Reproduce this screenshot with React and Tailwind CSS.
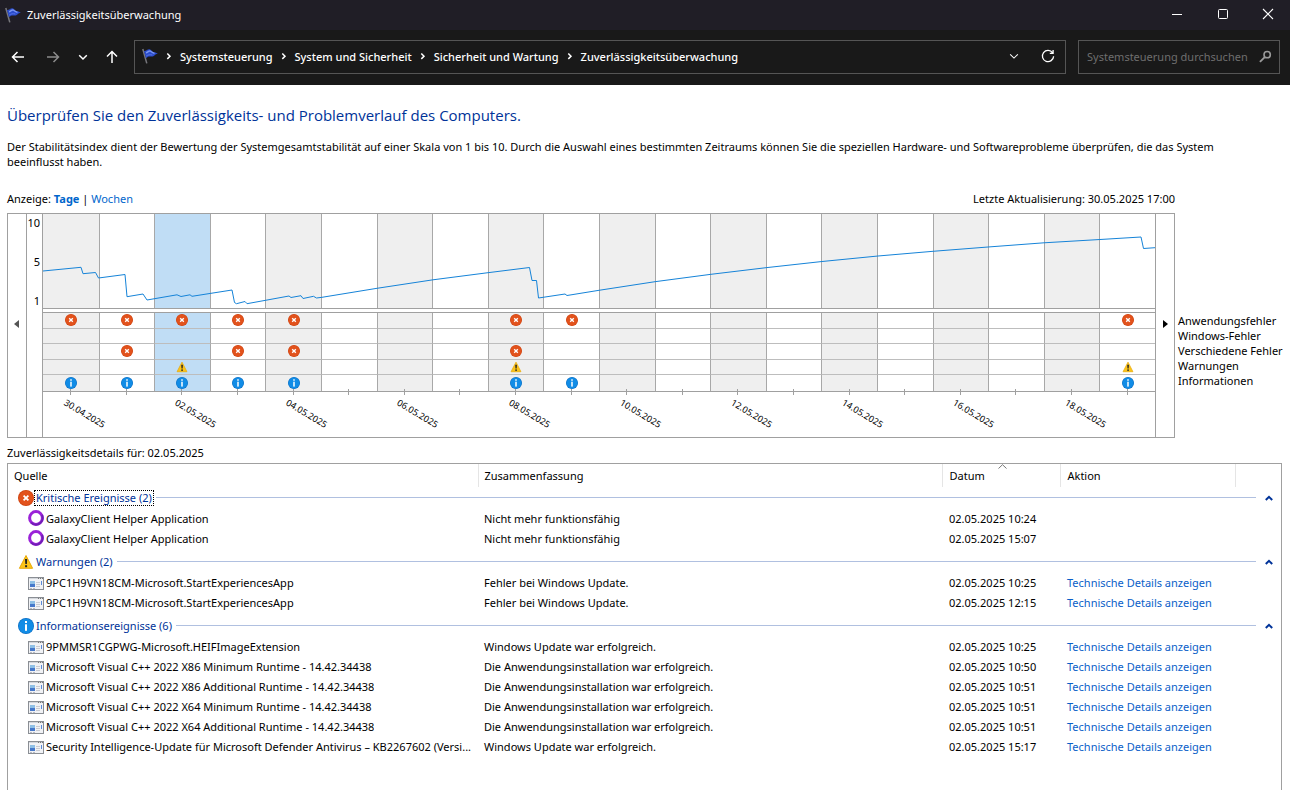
const breadcrumbs = [
  "Systemsteuerung",
  "System und Sicherheit",
  "Sicherheit und Wartung",
  "Zuverlässigkeitsüberwachung",
];

const days = [
  "30.04.2025", "01.05.2025", "02.05.2025", "03.05.2025", "04.05.2025",
  "05.05.2025", "06.05.2025", "07.05.2025", "08.05.2025", "09.05.2025",
  "10.05.2025", "11.05.2025", "12.05.2025", "13.05.2025", "14.05.2025",
  "15.05.2025", "16.05.2025", "17.05.2025", "18.05.2025", "19.05.2025",
];
const selectedDay = 2;

const categories = [
  { name: "Anwendungsfehler", icon: "error", hits: [0, 1, 2, 3, 4, 8, 9, 19] },
  { name: "Windows-Fehler", icon: "error", hits: [] },
  { name: "Verschiedene Fehler", icon: "error", hits: [1, 3, 4, 8] },
  { name: "Warnungen", icon: "warning", hits: [2, 8, 19] },
  { name: "Informationen", icon: "info", hits: [0, 1, 2, 3, 4, 8, 9, 19] },
];

const stability =
  "0,57 38,53.3 40,59.7 52.5,58.5 55.5,64 82,60.5 84,82.7 100,80 104,86 134,80.8 138,82.5 147,80.8 149,82.3 189,76 191.5,88.5 193.5,89.7 202,87.5 204,89.7 246,82 248,83.5 258,81.7 260,84.5 270.5,82.3 273.5,84 279,83.3 334,74.3 390,65.8 445,58.7 486.5,53.5 489,66.5 493.5,66.5 495.5,84 522,80 524,81.5 556,76.3 612,67.7 668,60.3 723,53.7 779,47.5 835,42 890,37.3 945,33 1001,28.8 1057,25.5 1098,23 1100.5,34.5 1112,33.7";

const details = "Technische Details anzeigen";
const installed = "Die Anwendungsinstallation war erfolgreich.";
const groups = [
  {
    title: "Kritische Ereignisse (2)",
    icon: "error",
    focused: true,
    rows: [
      ["ring", "GalaxyClient Helper Application", "Nicht mehr funktionsfähig", "02.05.2025 10:24", ""],
      ["ring", "GalaxyClient Helper Application", "Nicht mehr funktionsfähig", "02.05.2025 15:07", ""],
    ],
  },
  {
    title: "Warnungen (2)",
    icon: "warning",
    rows: [
      ["app", "9PC1H9VN18CM-Microsoft.StartExperiencesApp", "Fehler bei Windows Update.", "02.05.2025 10:25", details],
      ["app", "9PC1H9VN18CM-Microsoft.StartExperiencesApp", "Fehler bei Windows Update.", "02.05.2025 12:15", details],
    ],
  },
  {
    title: "Informationsereignisse (6)",
    icon: "info",
    rows: [
      ["app", "9PMMSR1CGPWG-Microsoft.HEIFImageExtension", "Windows Update war erfolgreich.", "02.05.2025 10:25", details],
      ["app", "Microsoft Visual C++ 2022 X86 Minimum Runtime - 14.42.34438", installed, "02.05.2025 10:50", details],
      ["app", "Microsoft Visual C++ 2022 X86 Additional Runtime - 14.42.34438", installed, "02.05.2025 10:51", details],
      ["app", "Microsoft Visual C++ 2022 X64 Minimum Runtime - 14.42.34438", installed, "02.05.2025 10:51", details],
      ["app", "Microsoft Visual C++ 2022 X64 Additional Runtime - 14.42.34438", installed, "02.05.2025 10:51", details],
      ["app", "Security Intelligence-Update für Microsoft Defender Antivirus – KB2267602 (Versi...", "Windows Update war erfolgreich.", "02.05.2025 15:17", details],
    ],
  },
];

function FlagIcon() {
  return (
    <svg viewBox="0 0 16 16" className="size-4 shrink-0" aria-hidden="true">
      <path d="M.8 1 4.8 15.4" stroke="#77777c" strokeWidth="1.5" />
      <path d="M2 3C4 3.400 5 1 7.600 1.200c1.600.1 2 2.200 3.600 2.800 1.400.5 3 .4 4.600 1.700-2 .2-2.700 1.100-4 2.200C10 9.400 8.400 8 6.800 8.600c-1.200.4-1.800 1.200-2.900 1.400z" fill="#2b4ccb" />
      <path d="M4 4.800C5.600 4.600 6.600 2.500 8.300 3.100c1.300.6 2.300 1.900 4.200 2.300" stroke="#7a96f2" strokeWidth="1.300" fill="none" />
      <path d="M4.200 8C6.500 6.700 7.800 6.400 10.300 7" stroke="#5674e4" strokeWidth="1" fill="none" />
    </svg>
  );
}

function StatusIcon({ kind, className }) {
  if (kind === "warning") {
    return (
      <svg viewBox="0 0 16 16" className={className} aria-hidden="true">
        <path d="M8 1.500 14.600 14.300H1.400z" fill="#fcc419" stroke="#e8a90a" strokeWidth="1" strokeLinejoin="round" />
        <path d="M7 5h2.200l-.3 5H7.300z" fill="#222" />
        <rect x="7.100" y="11.200" width="2" height="2" fill="#222" />
      </svg>
    );
  }
  if (kind === "info") {
    return (
      <svg viewBox="0 0 16 16" className={className} aria-hidden="true">
        <circle cx="8" cy="8" r="8" fill="#0c6fc4" />
        <circle cx="8" cy="8" r="7.300" fill="#118ce6" />
        <rect x="7" y="3" width="2" height="2" fill="#fff" />
        <rect x="7" y="6.300" width="2" height="6.500" fill="#fff" />
      </svg>
    );
  }
  return (
    <svg viewBox="0 0 16 16" className={className} aria-hidden="true">
      <circle cx="8" cy="8" r="8" fill="#cf4310" />
      <circle cx="8" cy="8" r="7.200" fill="#e2521c" />
      <path d="M5.600 5.600 10.400 10.400M10.400 5.600 5.600 10.400" stroke="#fff" strokeWidth="1.800" />
    </svg>
  );
}

function SourceIcon({ kind }) {
  if (kind === "ring") {
    return (
      <svg viewBox="0 0 16 16" className="size-4 shrink-0" aria-hidden="true">
        <circle cx="8" cy="8" r="6.400" fill="#fff" stroke="#9a22d8" strokeWidth="3" />
        <path d="M14 5A6.700 6.700 0 0 1 3.200 12.600" stroke="#6f1fb4" strokeWidth="2" fill="none" />
      </svg>
    );
  }
  return (
    <svg viewBox="0 0 16 16" className="size-4 shrink-0" shapeRendering="crispEdges" aria-hidden="true">
      <rect x="0" y="3" width="16" height="13" fill="#8a8e94" />
      <rect x="1" y="4" width="14" height="11" fill="#f1f2f5" />
      <rect x="1" y="4" width="14" height="1" fill="#d4d7dc" />
      <path d="M10 4h1v1h-1zM12 4h1v1h-1zM14 4h1v1h-1z" fill="#777" />
      <rect x="2" y="7" width="5" height="3" fill="#8fc0e6" />
      <rect x="2" y="10" width="5" height="3" fill="#4678ca" />
      <path d="M8 8h4v1H8zM8 10h4v1H8zM8 12h4v1H8z" fill="#c8cbd2" />
      <rect x="13" y="7" width="1" height="4" fill="#5a8ad8" />
      <path d="M2 14h2v1H2zM5 14h2v1H5z" fill="#b8bbc2" />
    </svg>
  );
}

function Stroke({ d, className, width = 1.5 }) {
  return (
    <svg viewBox="0 0 14 14" className={className} fill="none" stroke="currentColor" strokeWidth={width} aria-hidden="true">
      <path d={d} />
    </svg>
  );
}

function TitleBar() {
  return (
    <header className="flex h-[30px] items-center bg-[#201e26] pl-[5px]">
      <FlagIcon />
      <h1 className="ml-[6px] flex-1 pb-[2px] text-[11px]">Zuverlässigkeitsüberwachung</h1>
      <button aria-label="Minimieren" className="flex h-[30px] w-[46px] items-center justify-center pb-[2px]">
        <svg viewBox="0 0 12 12" className="size-3" shapeRendering="crispEdges"><path d="M1 6h10v1H1z" fill="#fff" /></svg>
      </button>
      <button aria-label="Maximieren" className="flex h-[30px] w-[45px] items-center justify-center pb-[2px]">
        <svg viewBox="0 0 12 12" className="size-3"><rect x="1.500" y="1.500" width="9" height="9" rx="1" fill="none" stroke="#fff" /></svg>
      </button>
      <button aria-label="Schließen" className="flex h-[30px] w-[45px] items-center justify-center pb-[2px]">
        <svg viewBox="0 0 12 12" className="size-3"><path d="M1 1 11 11M11 1 1 11" stroke="#fff" strokeWidth="1.100" /></svg>
      </button>
    </header>
  );
}

function Toolbar() {
  const chevron = "M5.300 4.500 8 7.200 5.300 9.900";
  return (
    <nav className="flex h-[55px] items-center bg-[#191919] pr-[10px] pb-px pl-[11px]">
      <button aria-label="Zurück" className="flex w-[14px] justify-center">
        <Stroke className="size-[14px]" d="M13 7H1.500M6.500 2 1.500 7l5 5" />
      </button>
      <button aria-label="Vorwärts" className="ml-[21px] flex w-[14px] justify-center text-[#8c8c8c]">
        <Stroke className="size-[14px]" d="M1 7h11.500M7.500 2l5 5-5 5" />
      </button>
      <button aria-label="Zuletzt besuchte Orte" className="ml-[16px] flex w-[14px] justify-center">
        <Stroke className="size-[14px]" d="M3.200 5.300 7 9l3.800-3.700" />
      </button>
      <button aria-label="Nach oben" className="ml-[15px] flex w-[14px] justify-center">
        <Stroke className="size-[14px]" d="M7 13V1.500M2 6.500l5-5 5 5" />
      </button>
      <div className="ml-[15px] flex h-[34px] flex-1 items-center border border-[#555] pr-[10px] pb-[2px] pl-[7px]">
        <FlagIcon />
        <ol className="flex flex-1 items-center text-[11px] font-medium">
          {breadcrumbs.map((b) => (
            <li key={b} className="flex items-center">
              <Stroke className="mx-[4px] size-[14px]" d={chevron} />
              <a href="#" className="whitespace-nowrap">{b}</a>
            </li>
          ))}
        </ol>
        <button aria-label="Vorherige Orte"><Stroke width={1.2} className="size-[12px]" d="M2.500 5 7 9.500 11.500 5" /></button>
        <button aria-label="Aktualisieren" className="ml-[21px]">
          <Stroke width={1.3} className="size-[14px]" d="M11.600 3.800A5.600 5.600 0 1 0 12.600 7.200M12.100 1V4.300H8.800" />
        </button>
      </div>
      <div className="ml-[12px] flex h-[34px] w-[202px] items-center border border-[#555] pr-[7px] pb-[2px] pl-[8px]">
        <input
          aria-label="Systemsteuerung durchsuchen"
          placeholder="Systemsteuerung durchsuchen"
          className="min-w-0 flex-1 bg-transparent text-[11px] outline-none placeholder:text-[#6e6e6e]"
        />
        <svg viewBox="0 0 14 14" className="size-[13px] text-[#9a9a9a]" fill="none" stroke="currentColor" aria-hidden="true">
          <circle cx="8.800" cy="5" r="3.400" strokeWidth="1.700" />
          <path d="M6.200 7.600 1 12.800" strokeWidth="2" />
        </svg>
      </div>
    </nav>
  );
}

function columnColor(i) {
  if (i === selectedDay) return "bg-[#c0ddf5]";
  return i % 2 === 0 ? "bg-[#efefef]" : "bg-white";
}

function Chart() {
  return (
    <div className="flex h-[225px] flex-1 border border-[#a0a0a0]">
      <button aria-label="Früher" className="flex w-[19px] justify-center border-r border-[#a0a0a0] pt-[106px] pr-px pb-[110px]">
        <svg viewBox="0 0 5 8" className="h-2 w-[5px]"><path d="M5 0v8L0 4z" fill="#555" /></svg>
      </button>
      <div className="flex h-[94px] w-[15px] flex-col justify-between pt-[2px] pr-[2px] text-right text-[11px] leading-[14px]">
        <span>10</span>
        <span>5</span>
        <span>1</span>
      </div>
      <div className="flex min-w-0 flex-1 flex-col border-x border-[#a0a0a0]">
        <div className="relative grid h-[95px] shrink-0 grid-cols-20 border-b border-[#a0a0a0]">
          {days.map((d, i) => (
            <div key={d} className={`border-l border-[#a8a8a8] first:border-l-0 ${columnColor(i)}`} />
          ))}
          <svg viewBox="0 0 1112 94" preserveAspectRatio="none" className="absolute inset-0 h-[94px] w-full">
            <polyline points={stability} fill="none" stroke="#1583d8" strokeWidth="1" vectorEffect="non-scaling-stroke" />
          </svg>
        </div>
        <div className="mt-[3px] grid h-[80px] shrink-0 grid-rows-5 border-y border-[#a0a0a0]">
          {categories.map((c, r) => (
            <div key={c.name} className="grid grid-cols-20">
              {days.map((d, i) => (
                <div
                  key={d}
                  className={`flex items-center justify-center border-l border-l-[#a8a8a8] first:border-l-0 ${r < 4 ? "border-b border-b-[#bdbdbd]" : ""} ${columnColor(i)}`}
                >
                  {c.hits.includes(i) && <StatusIcon kind={c.icon} className="size-3" />}
                </div>
              ))}
            </div>
          ))}
        </div>
        <div className="grid grid-cols-20">
          {days.map((d, i) => (
            <div key={d} className="-mt-[3px] flex flex-col items-center">
              <span className="h-[6px] w-px bg-[#a0a0a0]" />
              {i % 2 === 0 && (
                <span className="w-[4px] origin-top-left rotate-[31deg] text-[9px] leading-[16px] whitespace-nowrap">{d}</span>
              )}
            </div>
          ))}
        </div>
      </div>
      <button aria-label="Später" className="flex w-[18px] justify-center pt-[106px] pb-[110px]">
        <svg viewBox="0 0 5 8" className="h-2 w-[5px]"><path d="M0 0v8l5-4z" fill="#000" /></svg>
      </button>
    </div>
  );
}

function Details() {
  return (
    <section className="mt-[3px] flex-1 overflow-hidden border border-b-0 border-[#a0a0a0]">
      <table className="w-full table-fixed text-left whitespace-nowrap">
        <colgroup>
          <col className="w-[470px]" />
          <col />
          <col className="w-[118px]" />
          <col className="w-[175px]" />
          <col className="w-[46px]" />
        </colgroup>
        <thead>
          <tr className="h-[23px]">
            <th className="border-r border-[#e5e5e5] pl-[6px] font-normal">Quelle</th>
            <th className="border-r border-[#e5e5e5] pl-[6px] font-normal">Zusammenfassung</th>
            <th className="relative border-r border-[#e5e5e5] pl-[7px] font-normal">
              Datum
              <svg viewBox="0 0 9 5" className="absolute top-0 left-[55px] h-[5px] w-[9px]"><path d="M.5 4.500 4.500.7l4 3.800" fill="none" stroke="#777" /></svg>
            </th>
            <th className="border-r border-[#e5e5e5] pl-[7px] font-normal">Aktion</th>
            <th aria-label="Gruppe" />
          </tr>
        </thead>
        {groups.map((g) => (
          <tbody key={g.title}>
            <tr className={g.focused ? "h-[21px]" : "h-[24px]"}>
              <th colSpan={5} className={`p-0 font-normal ${g.focused ? "" : "pt-[3px]"}`}>
                <div className="flex items-center pr-[7px] pl-[10px] text-[#003399]">
                  <StatusIcon kind={g.icon} className="size-4" />
                  <span className={`px-px leading-[14px] ${g.focused ? "border border-dotted border-black" : "border border-transparent"}`}>{g.title}</span>
                  <span className="ml-[2px] h-px flex-1 bg-[#b0c0e0]" />
                  <button aria-label="Gruppe reduzieren" className="ml-[8px] flex w-[10px] justify-center">
                    <svg viewBox="0 0 8 6" className="h-[6px] w-2"><path d="M.800 5 4 1.800 7.200 5" fill="none" stroke="#003399" strokeWidth="2" /></svg>
                  </button>
                </div>
              </th>
            </tr>
            {g.rows.map(([icon, source, summary, date, action], i) => (
              <tr key={i} className="h-[20px]">
                <td className="p-0 pl-[20px]">
                  <div className="flex items-center gap-[2px]">
                    <SourceIcon kind={icon} />
                    <span className="truncate">{source}</span>
                  </div>
                </td>
                <td className="p-0 pl-[6px]">{summary}</td>
                <td className="p-0 pl-[7px]">{date}</td>
                <td className="p-0 pl-[7px]">{action && <a href="#" className="text-[#0a60c8]">{action}</a>}</td>
                <td />
              </tr>
            ))}
          </tbody>
        ))}
      </table>
    </section>
  );
}

export default function App() {
  return (
    <div className="flex min-h-screen flex-col bg-white font-['Noto_Sans','Open_Sans',sans-serif] text-[11px] leading-[15px] text-black">
      <div className="text-white">
        <TitleBar />
        <Toolbar />
      </div>
      <main className="flex flex-1 flex-col pr-[8px] pl-[7px]">
        <h2 className="mt-[19px] font-['Open_Sans','Noto_Sans',sans-serif] text-[15px] leading-[22px] text-[#003399]">
          Überprüfen Sie den Zuverlässigkeits- und Problemverlauf des Computers.
        </h2>
        <p className="mt-[13px] pr-[24px]">
          Der Stabilitätsindex dient der Bewertung der Systemgesamtstabilität auf einer Skala von 1 bis 10. Durch die Auswahl eines bestimmten Zeitraums können Sie die speziellen Hardware- und Softwareprobleme überprüfen, die das System beeinflusst haben.
        </p>
        <div className="mt-[22px] flex justify-between pr-[107px]">
          <div>
            Anzeige: <a href="#" className="font-bold text-[#0066cc]">Tage</a> | <a href="#" className="text-[#0066cc]">Wochen</a>
          </div>
          <div>Letzte Aktualisierung: 30.05.2025 17:00</div>
        </div>
        <div className="mt-[7px] flex">
          <Chart />
          <ul className="mt-[100px] w-[107px] pl-[3px] whitespace-nowrap">
            {categories.map((c) => (
              <li key={c.name}>{c.name}</li>
            ))}
          </ul>
        </div>
        <div className="mt-[7px]">Zuverlässigkeitsdetails für: 02.05.2025</div>
        <Details />
      </main>
    </div>
  );
}
